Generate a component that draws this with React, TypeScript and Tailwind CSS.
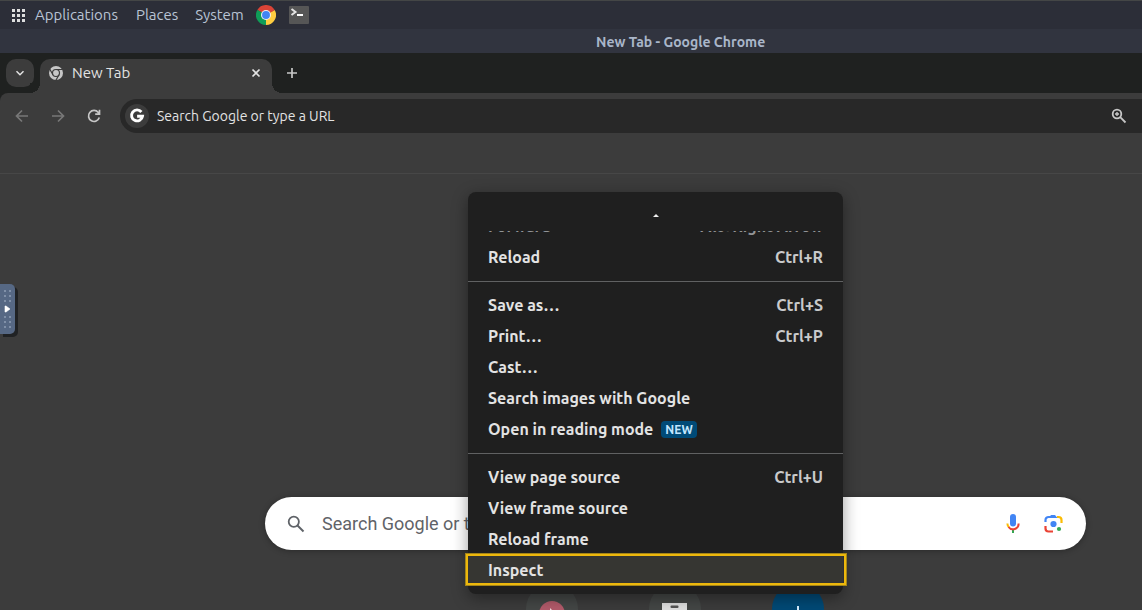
import type { ReactNode } from "react";

const ui = "font-['Ubuntu','Noto_Sans',sans-serif]";

function ChromeLogo() {
  return (
    <svg viewBox="0 0 48 48" className="size-5" aria-hidden="true">
      <path d="M24 24 3.2 12A24 24 0 0 1 44.8 12Z" fill="#db4437" />
      <path d="M24 24 3.2 12A24 24 0 0 0 24 48Z" fill="#0f9d58" />
      <path d="M24 24 44.8 12A24 24 0 0 1 24 48Z" fill="#ffcd40" />
      <path d="M24 12H44.8L24 24Z" fill="#db4437" />
      <path d="M13.6 30 3.2 12 24 24Z" fill="#0f9d58" />
      <path d="M34.4 30 24 48V24Z" fill="#ffcd40" />
      <circle cx="24" cy="24" r="12" fill="#f1f1f1" />
      <circle cx="24" cy="24" r="9.5" fill="#4285f4" />
    </svg>
  );
}

function ChromeMono() {
  return (
    <svg viewBox="0 0 48 48" className="size-3.5 shrink-0" aria-hidden="true">
      <circle cx="24" cy="24" r="24" fill="#c7c7c7" />
      <g stroke="#3c3c3c" strokeWidth="4" fill="none">
        <circle cx="24" cy="24" r="12" />
        <path d="M24 12H47M13.6 30 2 10M34.4 30 23 50" />
      </g>
    </svg>
  );
}

function Terminal() {
  return (
    <svg viewBox="0 0 20 18" className="h-[18px] w-5" aria-hidden="true">
      <rect width="20" height="18" rx="1" fill="#565656" />
      <path d="m2.5 3 4 3-4 3" fill="none" stroke="#e4e4e4" strokeWidth="2" />
      <path d="M8 9h6" stroke="#fff" strokeWidth="2" />
    </svg>
  );
}

function Stroke({ d, className }: { d: string; className: string }) {
  return (
    <svg viewBox="0 0 16 16" className={className} fill="none" stroke="currentColor" strokeWidth="1.7" aria-hidden="true">
      <path d={d} />
    </svg>
  );
}

function GoogleG() {
  return (
    <svg viewBox="0 0 16 16" className="size-4" fill="none" stroke="#fff" strokeWidth="2.9" aria-hidden="true">
      <path d="M12.4 4A5.5 5.5 0 1 0 13.5 8.2H8.1" />
    </svg>
  );
}

function Mic() {
  return (
    <svg viewBox="0 0 24 24" className="size-6" aria-hidden="true">
      <rect x="9" y="2" width="6" height="12.5" rx="3" fill="#4285f4" />
      <path d="M11 17.5h2V21h-2z" fill="#34a853" />
      <path d="M6.4 11.5c0 1.6.6 2.9 1.6 3.9" stroke="#fbbc04" strokeWidth="2" fill="none" />
      <path d="M7.5 15A5.6 5.6 0 0 0 17.6 11.5" stroke="#ea4335" strokeWidth="2" fill="none" />
    </svg>
  );
}

function Lens() {
  return (
    <svg viewBox="0 0 24 24" className="size-6" aria-hidden="true" fill="none" strokeWidth="2.2">
      <path d="M4.5 10V8a3 3 0 0 1 3-3H9" stroke="#4285f4" />
      <path d="M10 3h4l2.5 3h-9z" fill="#4285f4" />
      <path d="M16 5h1.5a3 3 0 0 1 3 3v3" stroke="#fbbc04" />
      <path d="M4.5 14v2.5a3 3 0 0 0 3 3H12" stroke="#ea4335" />
      <circle cx="12.5" cy="12" r="3.1" fill="#4285f4" />
      <circle cx="18" cy="17" r="2.1" fill="#34a853" />
    </svg>
  );
}

function Item({ label, keys, children, selected }: { label: string; keys?: string; children?: ReactNode; selected?: boolean }) {
  return (
    <li role="none" className="relative">
      <button
        role="menuitem"
        className={
          selected
            ? "flex h-[31px] w-full items-center bg-[#363632] px-5 pb-0.5 text-left"
            : "flex h-[31px] w-full items-center px-5 pb-0.5 text-left"
        }
      >
        <span>{label}</span>
        {children}
        {keys && <span className="ml-auto text-[#c9cacb]">{keys}</span>}
      </button>
      {selected && (
        <span className="pointer-events-none absolute -top-px -right-[3px] bottom-px -left-[2px] border-2 border-[#edb80c] outline outline-[#a4851a]" />
      )}
    </li>
  );
}

const Separator = () => <li role="separator" className="my-2 h-px bg-[#606162]" />;

function ContextMenu() {
  return (
    <ul
      role="menu"
      className={`${ui} absolute top-[192px] left-[468px] w-[375px] rounded-lg bg-[#1f1f1f] pb-2 text-base font-semibold text-[#e3e3e3] shadow-[0_4px_16px_rgba(0,0,0,0.4)]`}
    >
      <li role="none" className="flex h-[39px] items-center justify-center pt-2">
        <svg viewBox="0 0 6 3" className="h-[3px] w-1.5" aria-hidden="true">
          <path d="M0 3 3 0l3 3Z" fill="#eee" />
        </svg>
      </li>
      <li role="none" className="flex h-[11px] items-end overflow-hidden">
        <button role="menuitem" disabled className="flex h-[31px] w-full shrink-0 items-center justify-between px-5 pb-0.5 text-[#929496]">
          <span>Forward</span>
          <span>Alt+Right Arrow</span>
        </button>
      </li>
      <Item label="Reload" keys="Ctrl+R" />
      <Separator />
      <Item label="Save as…" keys="Ctrl+S" />
      <Item label="Print…" keys="Ctrl+P" />
      <Item label="Cast…" />
      <Item label="Search images with Google" />
      <Item label="Open in reading mode">
        <span className="mt-0.5 ml-2 flex h-[17px] items-center rounded-sm bg-[#004a77] px-1 text-xs font-bold text-[#c2e7ff]">NEW</span>
      </Item>
      <Separator />
      <Item label="View page source" keys="Ctrl+U" />
      <Item label="View frame source" />
      <Item label="Reload frame" />
      <Item label="Inspect" selected />
    </ul>
  );
}

export default function App() {
  return (
    <div className={`${ui} relative flex h-screen flex-col overflow-hidden bg-[#3c3c3c] text-[#e3e3e3]`}>
      <nav className="flex h-[29px] shrink-0 items-center border-t border-[#444646] bg-[#2c2e38] pl-3 text-[15px] text-[#b9c4d5]">
        <svg viewBox="0 0 13 13" className="mr-2.5 size-[13px]" fill="#dedede" aria-hidden="true">
          <path d="M0 0h3v3H0zM5 0h3v3H5zM10 0h3v3h-3zM0 5h3v3H0zM5 5h3v3H5zM10 5h3v3h-3zM0 10h3v3H0zM5 10h3v3H5zM10 10h3v3h-3z" />
        </svg>
        <button className="mr-[18px]">Applications</button>
        <button className="mr-[17px]">Places</button>
        <button className="mr-3">System</button>
        <button aria-label="Google Chrome" className="mr-[13px]"><ChromeLogo /></button>
        <button aria-label="Terminal"><Terminal /></button>
      </nav>
      <div className="flex h-6 shrink-0 items-center bg-[#31343f] pt-0.5 pl-[596px] text-sm font-semibold whitespace-nowrap text-[#a9b6c9]">
        New Tab - Google Chrome
      </div>

      <div className="flex h-10 shrink-0 items-end bg-[#1f2120] pl-1.5">
        <button aria-label="Search tabs" className="mb-1.5 flex size-7 items-center justify-center rounded-[10px] bg-[#3c3c3c]">
          <Stroke d="m4 6 4 4 4-4" className="size-3.5" />
        </button>
        <div className="relative ml-1.5 flex h-[34px] w-[232px] items-center rounded-t-[10px] bg-[#3c3c3c] pr-2 pb-1.5 pl-[9px] text-[15px]">
          <span className="absolute bottom-0 -left-2.5 size-2.5 bg-[radial-gradient(circle_at_top_left,#1f2120_10px,#3c3c3c_10px)]" />
          <span className="absolute -right-2.5 bottom-0 size-2.5 bg-[radial-gradient(circle_at_top_right,#1f2120_10px,#3c3c3c_10px)]" />
          <ChromeMono />
          <span className="ml-[9px]">New Tab</span>
          <button aria-label="Close tab" className="ml-auto"><Stroke d="m4.5 4.5 7 7M11.5 4.5l-7 7" className="size-4" /></button>
        </div>
        <button aria-label="New tab" className="mb-3 ml-3 text-[#c7c7c7]"><Stroke d="M8 3v10M3 8h10" className="size-4" /></button>
      </div>

      <div className="shrink-0 bg-[#1f2120]">
        <div className="flex h-10 items-center rounded-tl-lg bg-[#3c3c3c] pt-1.5 pl-3.5">
          <button aria-label="Back" disabled className="mr-5 text-[#777]"><Stroke d="M14 8H3M8 2.5 2.5 8 8 13.5" className="size-4" /></button>
          <button aria-label="Forward" disabled className="mr-5 text-[#777]"><Stroke d="M2 8h11M8 2.5 13.5 8 8 13.5" className="size-4" /></button>
          <button aria-label="Reload" className="mr-[18px] text-[#c7c7c7]">
            <Stroke d="M13.3 9.5A5.5 5.5 0 1 1 12.3 4.5L13.5 6M13.5 1.8V6.2H9.2" className="size-4" />
          </button>
          <div className="flex h-[34px] min-w-0 flex-1 items-center rounded-l-full bg-[#282828] pr-[15px] pl-[5px]">
            <span className="flex size-6 shrink-0 items-center justify-center rounded-full bg-[#3c3c3c]"><GoogleG /></span>
            <input
              aria-label="Address bar"
              placeholder="Search Google or type a URL"
              className="ml-2 min-w-0 flex-1 bg-transparent text-sm outline-none placeholder:text-[#e3e3e3]"
            />
            <button aria-label="Zoom">
              <svg viewBox="0 0 16 16" className="size-4" fill="none" stroke="#c7c7c7" strokeWidth="1.8" aria-hidden="true">
                <circle cx="6" cy="6" r="4.3" />
                <path d="m9.2 9.2 5.3 5.3" />
                <path d="M6 4v4M4 6h4" strokeWidth="1.4" />
              </svg>
            </button>
          </div>
        </div>
      </div>
      <div className="h-[41px] shrink-0 border-b border-[#474747]" />

      <main className="flex flex-1 flex-col pt-[323px]">
        <label className="mr-14 ml-[265px] flex h-[53px] shrink-0 items-center rounded-full bg-white pr-[21px] pl-5 shadow-[0_1px_6px_rgba(0,0,0,0.3)]">
          <svg viewBox="0 0 22 22" className="size-[22px] shrink-0" fill="none" stroke="#5f6368" strokeWidth="1.8" aria-hidden="true">
            <circle cx="8.8" cy="8.8" r="5.1" />
            <path d="m12.5 12.5 6 6" strokeWidth="2" />
          </svg>
          <input
            aria-label="Search Google"
            placeholder="Search Google or type a URL"
            className="ml-[15px] min-w-0 flex-1 bg-transparent font-['Roboto',sans-serif] text-lg outline-none placeholder:text-[#5f6368]"
          />
          <button aria-label="Search by voice" className="mr-4"><Mic /></button>
          <button aria-label="Search by image"><Lens /></button>
        </label>
        <div className="mt-[33px] mr-[57px] ml-[264px] flex h-[52px] shrink-0 justify-center gap-[71px]">
          <a href="#one" aria-label="Shortcut" className="flex size-[52px] justify-center rounded-full bg-[#444746] pt-[18px]">
            <svg viewBox="0 0 26 26" className="size-[26px]" aria-hidden="true">
              <circle cx="13" cy="13" r="13" fill="#b35b6b" />
              <path d="M11 7v9l5-4z" fill="#f2dfe2" />
            </svg>
          </a>
          <a href="#two" aria-label="Web Store" className="flex size-[52px] justify-center rounded-full bg-[#444746] pt-5">
            <svg viewBox="0 0 25 24" className="h-6 w-[25px]" aria-hidden="true">
              <path d="M0 0h25v24H0z" fill="#e1e1e1" />
              <rect x="8.5" y="2.5" width="8" height="2.5" rx="1" fill="#555" />
            </svg>
          </a>
          <button aria-label="Add shortcut" className="flex size-[52px] items-start justify-center rounded-full bg-[#004a77] pt-[23px]">
            <svg viewBox="0 0 14 14" className="size-3.5" stroke="#d8efff" strokeWidth="2" aria-hidden="true">
              <path d="M7 0v14M0 7h14" />
            </svg>
          </button>
        </div>
      </main>

      <button
        aria-label="Open panel"
        className="absolute top-[284px] left-0 flex h-[50px] w-[15px] items-center rounded-r-[5px] bg-[#566884] shadow-[3px_3px_0_#202224]"
      >
        <svg viewBox="0 0 15 50" className="h-[50px] w-[15px]" aria-hidden="true">
          <path
            fill="#8090a8"
            d="M4 6h2v2H4zM9 6h2v2H9zM4 11h2v2H4zM9 11h2v2H9zM4 16h2v2H4zM9 16h2v2H9zM4 32h2v2H4zM9 32h2v2H9zM4 37h2v2H4zM9 37h2v2H9zM4 42h2v2H4zM9 42h2v2H9z"
          />
          <path d="M5 22h1l4 3-4 3H5z" fill="#fff" stroke="#fff" strokeWidth="0.6" />
        </svg>
      </button>
      <ContextMenu />
    </div>
  );
}
